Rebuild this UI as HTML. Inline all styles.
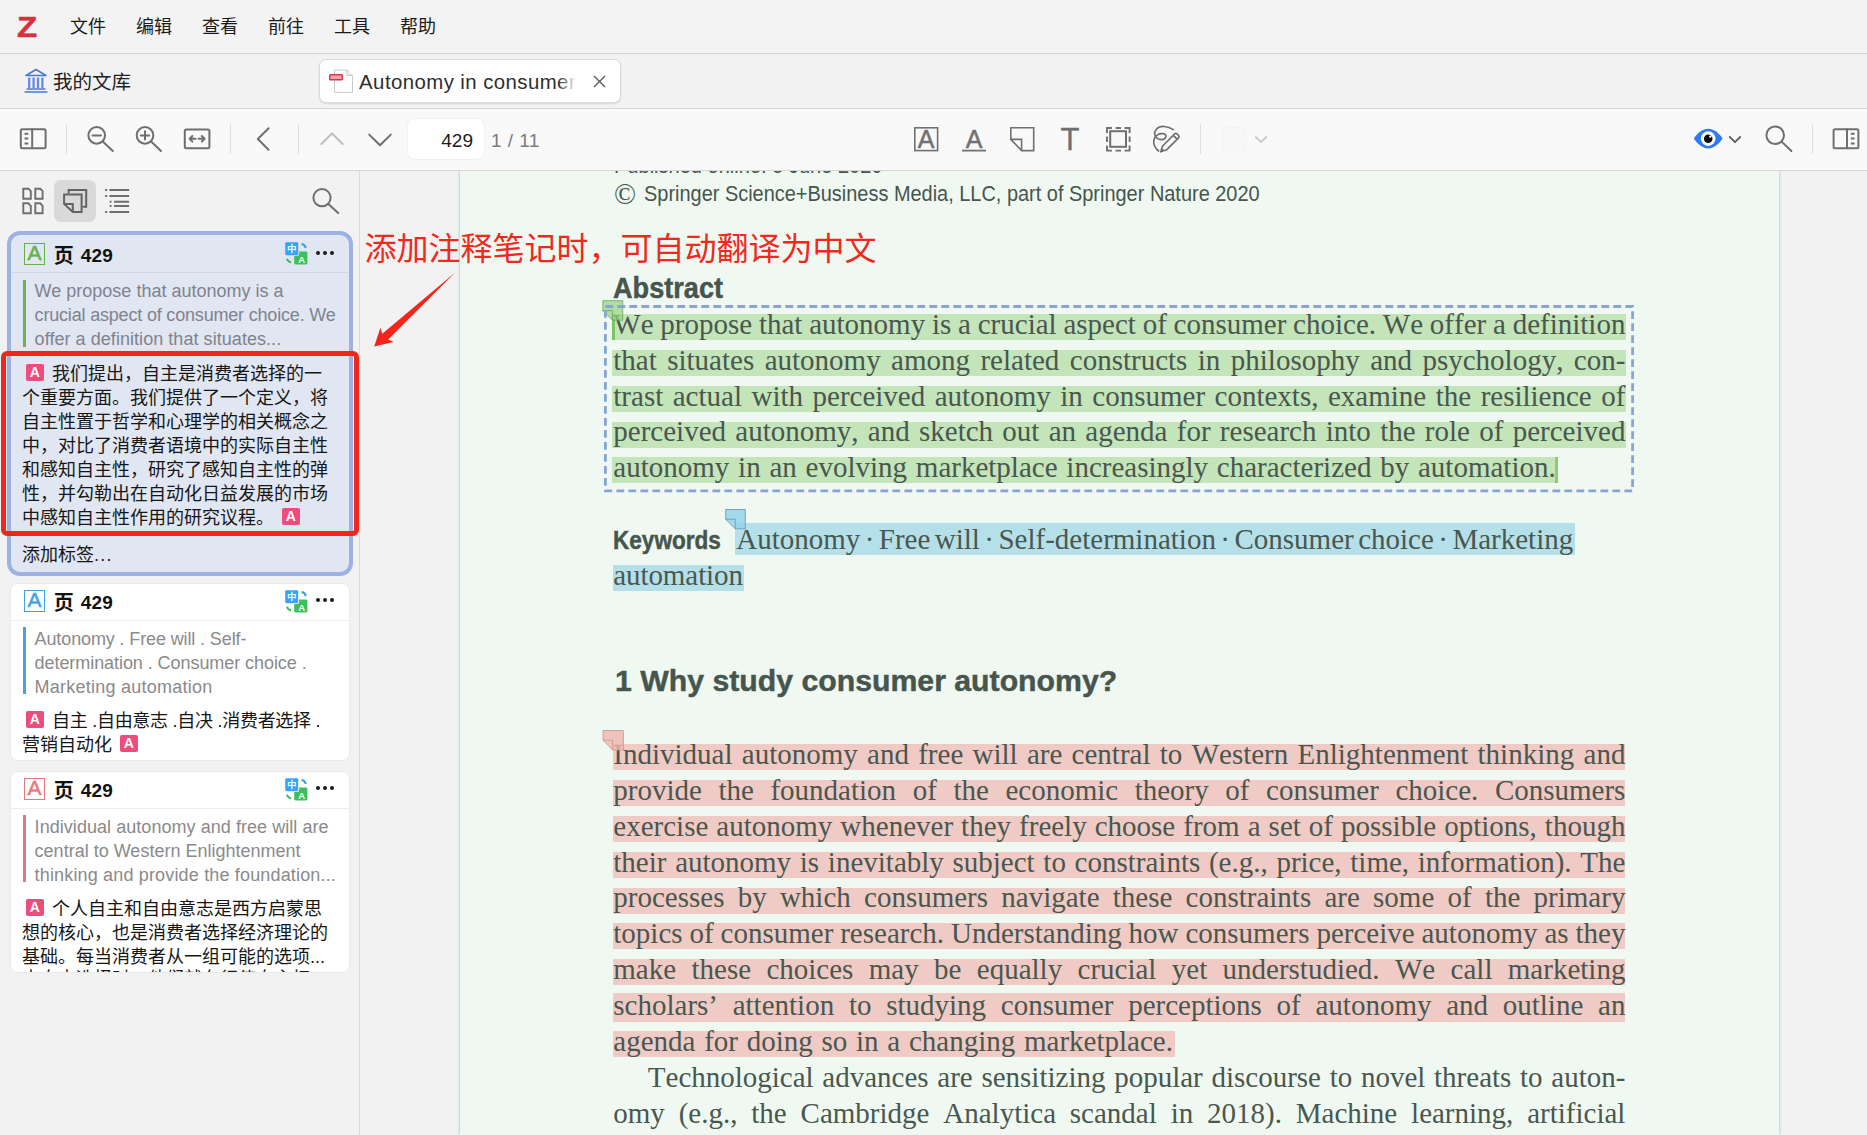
<!DOCTYPE html>
<html lang="zh-CN">
<head>
<meta charset="utf-8">
<title>Autonomy in consumer choice - Zotero</title>
<style>
*{box-sizing:border-box;margin:0;padding:0}
html,body{width:1867px;height:1135px;overflow:hidden;background:#f2f2f2}
body{position:relative;font-family:"Liberation Sans","Noto Sans CJK SC",sans-serif;color:#1a1a1a}
.abs{position:absolute}
/* ---------- menu bar ---------- */
#menubar{position:absolute;left:0;top:0;width:1867px;height:54px;background:#f3f3f3;border-bottom:1px solid #d4d4d4}
#menubar .mi{position:absolute;top:13px;height:28px;line-height:28px;font-size:18px;color:#1b1b1b;white-space:nowrap}
#zlogo{position:absolute;left:16.8px;top:9.1px;font-family:"Liberation Sans",sans-serif;font-weight:bold;font-size:30px;line-height:36px;color:#d9303e;-webkit-text-stroke:.5px #d9303e;transform:scaleX(1.1);transform-origin:0 50%}
/* ---------- tab bar ---------- */
#tabbar{position:absolute;left:0;top:54px;width:1867px;height:55px;background:#f2f2f2;border-bottom:1px solid #d6d6d6}
#libtab{position:absolute;left:53px;top:14px;font-size:19.5px;line-height:28px;color:#222;white-space:nowrap}
#tab{position:absolute;left:319px;top:5px;width:301.5px;height:44px;background:#fff;border:1px solid #d9d9d9;border-radius:7px;box-shadow:0 1px 2px rgba(0,0,0,.12)}
#tab .tt{position:absolute;left:39.1px;top:6.5px;width:226px;height:30px;line-height:30px;font-size:20.4px;color:#2e2e2e;white-space:nowrap;overflow:hidden}
#tab .fade{position:absolute;left:238px;top:4px;width:30px;height:34px;background:linear-gradient(90deg,rgba(255,255,255,0),rgba(255,255,255,.9) 55%,#fff 85%)}
/* ---------- toolbar ---------- */
#toolbar{position:absolute;left:0;top:109px;width:1867px;height:62px;background:#f9f9f9;border-bottom:1px solid #d6d6d6}
.sep{position:absolute;top:15px;width:1px;height:30px;background:#dedede}
#pageinput{position:absolute;left:408px;top:10px;width:76px;height:40px;background:#fff;border-radius:7px;font-size:19px;line-height:43px;text-align:right;padding-right:11px;color:#1c1c1c;box-shadow:0 0 0 1px rgba(0,0,0,.03)}
#pagecount{position:absolute;left:491px;top:10px;height:40px;line-height:43px;font-size:19px;color:#7c7c7c;white-space:nowrap;letter-spacing:.45px}
svg{position:absolute;overflow:visible}
.ic{fill:none;stroke:#6f6f6f;stroke-width:2;stroke-linecap:round;stroke-linejoin:round}
/* ---------- sidebar ---------- */
#sidebar{position:absolute;left:0;top:171px;width:360px;height:964px;background:#f2f2f2;border-right:1px solid #dadada}
#selbtn{position:absolute;left:54px;top:9px;width:42px;height:42px;border-radius:7px;background:#d9d9d9}
.card{position:absolute;left:10px;width:340px;background:#fff;border:1px solid #e9e9e9;border-radius:7px;overflow:hidden}
.card.sel{left:7px;width:346px;background:#e0e6f2;border:4px solid #9db1e5;border-radius:13px}
.card .hd{position:absolute;left:0;top:0;right:0;border-bottom:1px solid #ececec}
.card.sel .hd{border-bottom-color:#d0d6e3}
.card .pg{position:absolute;font-weight:bold;font-size:20px;line-height:24px;color:#111;white-space:nowrap}
.card .bar{position:absolute;width:3px}
.card .q{position:absolute;font-size:18px;line-height:24px;color:#8a8a8a;white-space:nowrap}
.card.sel .q{color:#7e838e}
.card .c{position:absolute;font-size:18px;line-height:24px;color:#161616;white-space:nowrap}
.pa{display:inline-block;width:17.6px;height:17.4px;background:#ee4c7c;border-radius:2px;color:#fff;font-weight:bold;font-size:14px;line-height:17px;text-align:center;vertical-align:3px;font-family:"Liberation Sans",sans-serif}
.dots{position:absolute;width:20px;height:4px}
.dots i{position:absolute;top:0;width:4px;height:4px;border-radius:50%;background:#1a1a1a}
.pa{margin-left:4px;margin-right:8.4px}
.pa.e{margin-left:8px;margin-right:0}
.num{font-size:19px;letter-spacing:.15px;margin-left:1px}
.ye{position:relative;top:1px;left:-.4px}
/* ---------- viewer ---------- */
#viewer{position:absolute;left:360px;top:171px;width:1507px;height:964px;background:#f2f2f2;overflow:hidden}
#pc{position:absolute;left:-360px;top:-171px;width:1867px;height:1135px}
#page{position:absolute;left:460px;top:171px;width:1319px;height:964px;background:#f0f9f1;box-shadow:0 0 3px rgba(0,0,0,.28)}
.ln{font-kerning:none;position:absolute;left:614px;width:1011px;height:36px;line-height:36px;font-family:"Liberation Serif",serif;font-size:29px;color:#49574f;white-space:nowrap;text-align:justify;text-align-last:justify}
.ln.l{text-align:left;text-align-last:left;width:auto}
.sans{position:absolute;font-family:"Liberation Sans",sans-serif;color:#46554d;white-space:nowrap;transform-origin:0 50%}
.sans.b{-webkit-text-stroke:0.45px #46554d}
.hl{position:absolute;height:26px}
.hg{background:#c4e4ba}.hb{background:#b5e0ea}.hr{background:#f0cbc5}
#redbox{position:absolute;left:1px;top:180.4px;width:358.4px;height:184.6px;border:5px solid #f3261d;border-radius:6px}
#redtxt{position:absolute;left:364.6px;top:226.7px;font-size:32px;line-height:44px;color:#f0281e;white-space:nowrap}
</style>
</head>
<body>
<!-- MENU BAR -->
<div id="menubar">
  <div id="zlogo">Z</div>
  <div class="mi" style="left:70px">文件</div>
  <div class="mi" style="left:136px">编辑</div>
  <div class="mi" style="left:202px">查看</div>
  <div class="mi" style="left:268px">前往</div>
  <div class="mi" style="left:334px">工具</div>
  <div class="mi" style="left:400px">帮助</div>
</div>
<!-- TAB BAR -->
<div id="tabbar">
  <svg style="left:24px;top:14px" width="24" height="25" viewBox="0 0 24 25"><g fill="none" stroke="#4a78d6" stroke-width="1.6"><path d="M2 7.5L12 1.5L22 7.5Z" stroke-linejoin="round"/><path d="M5.2 9.5V20M9.6 9.5V20M14 9.5V20M18.4 9.5V20" stroke-width="2.3" stroke="#668ce0"/><path d="M2.5 21H21.5M0.5 24H23.5"/></g></svg>
  <div id="libtab">我的文库</div>
  <div id="tab">
    <svg style="left:9.1px;top:9.1px" width="25" height="25" viewBox="0 0 25 25"><path d="M5.5 1H18L23.5 6.5V23.5H5.5Z" fill="#fff" stroke="#c9c9c9" stroke-width="1"/><path d="M18 1V6.5H23.5" fill="#f0f0f0" stroke="#c9c9c9" stroke-width="1"/><rect x="0.7" y="5.7" width="12.6" height="5" rx="0.8" fill="#f4a3ae" stroke="#d8364a" stroke-width="1.4"/></svg>
    <div class="tt"><span style="letter-spacing:0.423px">Autonomy in consumer</span> choice</div>
    <div class="fade"></div>
    <svg style="left:272.5px;top:14.9px" width="13" height="13" viewBox="0 0 13 13"><path d="M1 1L12 12M12 1L1 12" stroke="#5a5a5a" stroke-width="1.4" fill="none"/></svg>
  </div>
</div>
<!-- TOOLBAR -->
<div id="toolbar">
  <div class="sep" style="left:66px"></div>
  <div class="sep" style="left:230px"></div>
  <div class="sep" style="left:298px"></div>
  <div class="sep" style="left:1200px"></div>
  <div class="sep" style="left:1812px"></div>
  <div id="pageinput">429</div>
  <div id="pagecount">1 / 11</div>
  <svg style="left:0;top:0" width="1867" height="62" viewBox="0 109 1867 62">
    <!-- sidebar toggle -->
    <g class="ic"><rect x="20.8" y="129.2" width="24.8" height="19" rx="1.5"/><path d="M32.2 129.2V148.2"/><path d="M24.5 133.8H28.3M24.5 138.6H28.3M24.5 143.4H28.3" stroke-linecap="butt"/></g>
    <!-- zoom out -->
    <g class="ic"><circle cx="96.7" cy="135.4" r="8.3"/><path d="M92.5 135.4H101M102.8 141.6L112.8 151"/></g>
    <!-- zoom in -->
    <g class="ic"><circle cx="145" cy="135.4" r="8.3"/><path d="M140.8 135.4H149.2M145 131.2V139.6M151.1 141.6L161 151"/></g>
    <!-- fit width -->
    <g class="ic"><rect x="184.8" y="129.4" width="24.6" height="18.8" rx="1.5"/><path d="M189.6 138.8H195.6M192.4 136L189.6 138.8L192.4 141.6M198.6 138.8H204.6M201.8 136L204.6 138.8L201.8 141.6"/></g>
    <!-- back -->
    <path class="ic" d="M268.6 128.2L257.8 139L268.6 149.8"/>
    <!-- up / down -->
    <path class="ic" d="M321.4 144L332 133.4L342.6 144" style="stroke:#bdbdbd"/>
    <path class="ic" d="M369.2 134.6L380 145.2L390.8 134.6"/>
    <!-- highlight -->
    <rect x="914.8" y="127.8" width="22.8" height="22.8" fill="none" stroke="#707070" stroke-width="1.6"/>
    <text x="926.2" y="148" text-anchor="middle" font-family="Liberation Sans, sans-serif" font-size="25" fill="#707070" stroke="#707070" stroke-width="0.5">A</text>
    <!-- underline -->
    <text x="974.1" y="148" text-anchor="middle" font-family="Liberation Sans, sans-serif" font-size="25" fill="#707070" stroke="#707070" stroke-width="0.5">A</text>
    <path d="M962 150.6H986" stroke="#707070" stroke-width="1.8" fill="none"/>
    <!-- note -->
    <path d="M1010.8 127.8H1033.7V150.6H1021.6L1010.8 139.4ZM1010.8 139.4H1021.6V150.6" fill="none" stroke="#707070" stroke-width="1.6" stroke-linejoin="miter"/>
    <!-- text -->
    <text x="1070" y="149.5" text-anchor="middle" font-family="Liberation Sans, sans-serif" font-size="31" fill="#707070" stroke="#707070" stroke-width="0.3">T</text>
    <!-- area -->
    <path d="M1107 133V128H1112M1115.6 128H1121M1124.6 128H1129.6V133M1129.6 136.6V142M1129.6 145.6V150.6H1124.6M1121 150.6H1115.6M1112 150.6H1107V145.6M1107 142V136.6" fill="none" stroke="#707070" stroke-width="1.9"/>
    <rect x="1110.2" y="131.2" width="15.8" height="15.6" fill="none" stroke="#707070" stroke-width="2"/>
    <!-- ink -->
    <path d="M1173.4 129.6C1168 126 1160 125 1156.4 129.2C1153.4 132.6 1154.4 136.2 1157 138.2C1160.2 140.6 1165.2 140 1165.9 136.6C1166.5 133.4 1161 132.6 1157.6 134.9C1152 138.6 1152.6 146 1158.6 151" fill="none" stroke="#707070" stroke-width="1.7" stroke-linecap="round"/>
    <path d="M1160.8 151.8L1162.6 146L1175 133.6Q1175.9 132.9 1176.8 133.6L1178.8 135.8Q1179.5 136.7 1178.8 137.6L1166.6 149.8ZM1173.4 135.4L1177 139.2" fill="none" stroke="#707070" stroke-width="1.7" stroke-linejoin="round"/>
    <path d="M1160.8 151.8L1162 148.2L1164.6 150.6Z" fill="#707070"/>
    <!-- colour swatch -->
    <rect x="1223" y="127.4" width="23" height="23" rx="3.5" fill="#f7f7f7" stroke="#f3f3f3" stroke-width="1"/>
    <path class="ic" d="M1255.8 137L1261 142.2L1266.2 137" style="stroke:#c9c9c9;stroke-width:1.8"/>
    <!-- eye -->
    <path d="M1693.8 138.6C1698 132.4 1702.8 128.8 1708.2 128.8C1713.6 128.8 1718.4 132.4 1722.6 138.6C1718.4 144.8 1713.6 148.4 1708.2 148.4C1702.8 148.4 1698 144.8 1693.8 138.6Z" fill="#2e7bf5"/>
    <circle cx="1708.2" cy="138.6" r="7.3" fill="#fff"/><circle cx="1708.2" cy="138.8" r="4.3" fill="#0c0c0c"/><circle cx="1710.3" cy="136.6" r="1.2" fill="#fff"/>
    <path class="ic" d="M1729.8 137L1735 142.2L1740.2 137" style="stroke:#5f5f5f;stroke-width:1.8"/>
    <!-- search -->
    <g class="ic"><circle cx="1775.2" cy="135.2" r="8.8"/><path d="M1781.6 141.6L1791.4 151"/></g>
    <!-- right pane -->
    <g class="ic"><rect x="1833.6" y="129.2" width="24.8" height="19" rx="1.5"/><path d="M1847 129.2V148.2"/><path d="M1850.8 133.8H1854.6M1850.8 138.6H1854.6M1850.8 143.4H1854.6" stroke-linecap="butt"/></g>
  </svg>
</div>
<!-- SIDEBAR -->
<div id="sidebar">
<div id="selbtn"></div>
<svg style="left:0;top:0" width="360" height="60" viewBox="0 171 360 60">
<g fill="none" stroke="#6e6e6e" stroke-width="1.9" stroke-linejoin="miter">
<path d="M23.3 188.7H28.4L30.8 191.2V198.7H23.3Z"/><path d="M35.3 188.7H40.2L42.6 191.2V198.7H35.3Z"/>
<path d="M23.3 203.3H28.4L30.8 205.8V213.2H23.3Z"/><path d="M35.3 203.3H40.2L42.6 205.8V213.2H35.3Z"/>
</g>
<g fill="none" stroke="#636363" stroke-width="2" stroke-linejoin="miter">
<path d="M68.6 193.4V189.9H86.2V206.8H82.6"/>
<path d="M64.1 194.4H81.6V211.9H72.8L64.1 203.9ZM64.1 203.9H72.8V211.9"/>
</g>
<g fill="none" stroke="#6e6e6e" stroke-width="2">
<path d="M105.1 190H107.1M109.4 190H129.1M105.1 195.9H107.1M109.4 195.9H129.1M109.7 201.7H111.5M114.1 201.7H129.1M109.7 206H111.5M114.1 206H129.1M105.1 212H107.1M109.4 212H129.1"/>
</g>
<g fill="none" stroke="#6e6e6e" stroke-width="2" stroke-linecap="round"><circle cx="322" cy="197.7" r="8.6"/><path d="M328.3 203.9L338.2 213"/></g>
</svg>
<div class="card sel" style="top:60px;height:345px">
<div class="hd" style="height:38.0px"></div>
<div class="abs" style="left:12.9px;top:8.2px;width:21.2px;height:21.4px;border:1.8px solid #66b145;color:#66b145;font-size:21px;line-height:18.6px;text-align:center;font-family:'Liberation Sans',sans-serif;-webkit-text-stroke:0.5px #66b145">A</div>
<div class="pg" style="left:43.2px;top:7.9px"><span class="ye">页</span> <span class="num">429</span></div>
<svg style="left:273.8px;top:7.400000000000006px" width="23" height="23" viewBox="0 0 23 23"><rect x="9.2" y="9.4" width="13.2" height="13" rx="1.4" fill="#3cc05c"/><rect x="-0.9" y="-0.8" width="15" height="14.8" rx="2.2" fill="#e0e6f2" class="tbg"/><rect x="0.2" y="0.2" width="13" height="13" rx="1.4" fill="#36a3f5"/><text x="6.7" y="10.2" text-anchor="middle" font-size="9.5" font-weight="bold" fill="#eaffff" font-family="Noto Sans CJK SC, sans-serif">中</text><text x="16.6" y="20.6" text-anchor="middle" font-size="9.5" font-weight="bold" fill="#f0fff0" font-family="Liberation Sans, sans-serif">A</text><path d="M16.6 1.9A5.4 5.4 0 0 1 20.8 6" fill="none" stroke="#3a9be6" stroke-width="2"/><path d="M1.9 16.8A5.4 5.4 0 0 0 6 20.4" fill="none" stroke="#3cb85a" stroke-width="2"/></svg>
<div class="dots" style="left:304.8px;top:16.200000000000017px"><i style="left:0"></i><i style="left:7.1px"></i><i style="left:14.2px"></i></div>
<div class="bar" style="left:12px;top:44.9px;height:67.1px;background:#6db34a"></div>
<div class="q" style="letter-spacing:0.006px;left:23.6px;top:43.90px">We propose that autonomy is a</div>
<div class="q" style="letter-spacing:-0.184px;left:23.6px;top:68.00px">crucial aspect of consumer choice. We</div>
<div class="q" style="letter-spacing:0.051px;left:23.6px;top:92.00px">offer a definition that situates...</div>
<div class="c" style="left:11px;top:127.0px"><span class="pa">A</span>我们提出，自主是消费者选择的一</div>
<div class="c" style="left:11px;top:151.0px">个重要方面。我们提供了一个定义，将</div>
<div class="c" style="left:11px;top:175.0px">自主性置于哲学和心理学的相关概念之</div>
<div class="c" style="left:11px;top:199.0px">中，对比了消费者语境中的实际自主性</div>
<div class="c" style="left:11px;top:223.0px">和感知自主性，研究了感知自主性的弹</div>
<div class="c" style="left:11px;top:247.0px">性，并勾勒出在自动化日益发展的市场</div>
<div class="c" style="left:11px;top:271.0px">中感知自主性作用的研究议程。<span class="pa e">A</span></div>
<div class="c" style="left:11px;top:307.7px">添加标签<span style="letter-spacing:1.3px">...</span></div>
</div>
<div class="card" style="top:412px;height:177.6px">
<div class="hd" style="height:37.0px"></div>
<div class="abs" style="left:12.9px;top:6.4px;width:21.2px;height:21.4px;border:1.8px solid #43a4df;color:#43a4df;font-size:21px;line-height:18.6px;text-align:center;font-family:'Liberation Sans',sans-serif;-webkit-text-stroke:0.5px #43a4df">A</div>
<div class="pg" style="left:43.2px;top:6.1px"><span class="ye">页</span> <span class="num">429</span></div>
<svg style="left:273.8px;top:5.600000000000023px" width="23" height="23" viewBox="0 0 23 23"><rect x="9.2" y="9.4" width="13.2" height="13" rx="1.4" fill="#3cc05c"/><rect x="-0.9" y="-0.8" width="15" height="14.8" rx="2.2" fill="#ffffff" class="tbg"/><rect x="0.2" y="0.2" width="13" height="13" rx="1.4" fill="#36a3f5"/><text x="6.7" y="10.2" text-anchor="middle" font-size="9.5" font-weight="bold" fill="#eaffff" font-family="Noto Sans CJK SC, sans-serif">中</text><text x="16.6" y="20.6" text-anchor="middle" font-size="9.5" font-weight="bold" fill="#f0fff0" font-family="Liberation Sans, sans-serif">A</text><path d="M16.6 1.9A5.4 5.4 0 0 1 20.8 6" fill="none" stroke="#3a9be6" stroke-width="2"/><path d="M1.9 16.8A5.4 5.4 0 0 0 6 20.4" fill="none" stroke="#3cb85a" stroke-width="2"/></svg>
<div class="dots" style="left:304.8px;top:14.399999999999977px"><i style="left:0"></i><i style="left:7.1px"></i><i style="left:14.2px"></i></div>
<div class="bar" style="left:12px;top:43.2px;height:66.7px;background:#4ba3da"></div>
<div class="q" style="letter-spacing:-0.121px;left:23.6px;top:42.90px">Autonomy . Free will . Self-</div>
<div class="q" style="letter-spacing:-0.065px;left:23.6px;top:67.00px">determination . Consumer choice .</div>
<div class="q" style="letter-spacing:0.245px;left:23.6px;top:91.00px">Marketing automation</div>
<div class="c" style="left:11px;top:125.0px"><span class="pa">A</span><span class="fit" style="letter-spacing:-0.272px">自主 .自由意志 .自决 .消费者选择 .</span></div>
<div class="c" style="left:11px;top:148.6px">营销自动化<span class="pa e">A</span></div>

</div>
<div class="card" style="top:600px;height:201.6px">
<div class="hd" style="height:37.0px"></div>
<div class="abs" style="left:12.9px;top:6.4px;width:21.2px;height:21.4px;border:1.8px solid #e8797b;color:#e8797b;font-size:21px;line-height:18.6px;text-align:center;font-family:'Liberation Sans',sans-serif;-webkit-text-stroke:0.5px #e8797b">A</div>
<div class="pg" style="left:43.2px;top:6.1px"><span class="ye">页</span> <span class="num">429</span></div>
<svg style="left:273.8px;top:5.600000000000023px" width="23" height="23" viewBox="0 0 23 23"><rect x="9.2" y="9.4" width="13.2" height="13" rx="1.4" fill="#3cc05c"/><rect x="-0.9" y="-0.8" width="15" height="14.8" rx="2.2" fill="#ffffff" class="tbg"/><rect x="0.2" y="0.2" width="13" height="13" rx="1.4" fill="#36a3f5"/><text x="6.7" y="10.2" text-anchor="middle" font-size="9.5" font-weight="bold" fill="#eaffff" font-family="Noto Sans CJK SC, sans-serif">中</text><text x="16.6" y="20.6" text-anchor="middle" font-size="9.5" font-weight="bold" fill="#f0fff0" font-family="Liberation Sans, sans-serif">A</text><path d="M16.6 1.9A5.4 5.4 0 0 1 20.8 6" fill="none" stroke="#3a9be6" stroke-width="2"/><path d="M1.9 16.8A5.4 5.4 0 0 0 6 20.4" fill="none" stroke="#3cb85a" stroke-width="2"/></svg>
<div class="dots" style="left:304.8px;top:14.399999999999977px"><i style="left:0"></i><i style="left:7.1px"></i><i style="left:14.2px"></i></div>
<div class="bar" style="left:12px;top:43.2px;height:67.0px;background:#e87678"></div>
<div class="q" style="letter-spacing:0.049px;left:23.6px;top:43.30px">Individual autonomy and free will are</div>
<div class="q" style="letter-spacing:0.006px;left:23.6px;top:67.40px">central to Western Enlightenment</div>
<div class="q" style="letter-spacing:0.163px;left:23.6px;top:91.40px">thinking and provide the foundation...</div>
<div class="c" style="left:11px;top:124.5px"><span class="pa">A</span>个人自主和自由意志是西方启蒙思</div>
<div class="c" style="left:11px;top:148.5px">想的核心，也是消费者选择经济理论的</div>
<div class="c" style="left:11px;top:172.5px">基础。每当消费者从一组可能的选项...</div>
<div class="c" style="left:11px;top:195.3px">中自由选择时，他们就在行使自主权。</div>

</div>
<div id="redbox"></div>
</div>
<!-- VIEWER -->
<div id="viewer">
<div id="pc">
<div id="page"></div>
<div class="hl hg" style="left:611.6px;top:314.1px;width:1014.4px;height:26px"></div>
<div class="hl hg" style="left:611.6px;top:349.9px;width:1014.4px;height:26px"></div>
<div class="hl hg" style="left:611.6px;top:385.7px;width:1014.4px;height:26px"></div>
<div class="hl hg" style="left:611.6px;top:421.5px;width:1014.4px;height:26px"></div>
<div class="hl hg" style="left:611.6px;top:457.3px;width:946.6px;height:26px"></div>
<div class="hl hb" style="left:735.1px;top:523.3px;width:840.2px;height:31.3px"></div>
<div class="hl hb" style="left:613.4px;top:564.9px;width:130.2px;height:26px"></div>
<div class="hl hr" style="left:613.2px;top:744.1px;width:1012.0px;height:26px"></div>
<div class="hl hr" style="left:613.2px;top:779.9px;width:1012.0px;height:26px"></div>
<div class="hl hr" style="left:613.2px;top:815.8px;width:1012.0px;height:26px"></div>
<div class="hl hr" style="left:613.2px;top:851.6px;width:1012.0px;height:26px"></div>
<div class="hl hr" style="left:613.2px;top:887.5px;width:1012.0px;height:26px"></div>
<div class="hl hr" style="left:613.2px;top:923.3px;width:1012.0px;height:26px"></div>
<div class="hl hr" style="left:613.2px;top:959.2px;width:1012.0px;height:26px"></div>
<div class="hl hr" style="left:613.2px;top:993.0px;width:1012.0px;height:29.3px"></div>
<div class="hl hr" style="left:613.2px;top:1030.9px;width:561.8px;height:26px"></div>
<div class="abs" style="left:611.6px;top:314.1px;width:3px;height:26px;background:#7cc362"></div>
<div class="abs" style="left:1555.2px;top:457.3px;width:3px;height:26px;background:#8ecb78"></div>
<div class="ln l" style="word-spacing:-0.466px;top:306.01px;left:613.3px">We propose that autonomy is a crucial aspect of consumer choice. We offer a definition</div>
<div class="ln l" style="word-spacing:3.191px;top:341.81px;left:613.3px">that situates autonomy among related constructs in philosophy and psychology, con-</div>
<div class="ln l" style="word-spacing:2.258px;top:377.61px;left:613.3px">trast actual with perceived autonomy in consumer contexts, examine the resilience of</div>
<div class="ln l" style="word-spacing:2.040px;top:413.41px;left:613.3px">perceived autonomy, and sketch out an agenda for research into the role of perceived</div>
<div class="ln l" style="word-spacing:1.540px;top:449.21px;left:613.3px">autonomy in an evolving marketplace increasingly characterized by automation.</div>
<div class="ln l" style="word-spacing:-2.795px;top:521.01px;left:736.2px">Autonomy · Free will · Self-determination · Consumer choice · Marketing</div>
<div class="ln l" style="letter-spacing:-0.088px;top:556.81px;left:613.3px">automation</div>
<div class="ln l" style="word-spacing:2.033px;top:736.01px;left:613.3px">Individual autonomy and free will are central to Western Enlightenment thinking and</div>
<div class="ln l" style="word-spacing:9.321px;top:771.86px;left:613.3px">provide the foundation of the economic theory of consumer choice. Consumers</div>
<div class="ln l" style="word-spacing:0.788px;top:807.71px;left:613.3px">exercise autonomy whenever they freely choose from a set of possible options, though</div>
<div class="ln l" style="word-spacing:1.442px;top:843.56px;left:613.3px">their autonomy is inevitably subject to constraints (e.g., price, time, information). The</div>
<div class="ln l" style="word-spacing:5.986px;top:879.41px;left:613.3px">processes by which consumers navigate these constraints are some of the primary</div>
<div class="ln l" style="word-spacing:-0.340px;top:915.26px;left:613.3px">topics of consumer research. Understanding how consumers perceive autonomy as they</div>
<div class="ln l" style="word-spacing:8.118px;top:951.11px;left:613.3px">make these choices may be equally crucial yet understudied. We call marketing</div>
<div class="ln l" style="word-spacing:7.463px;top:986.96px;left:613.3px">scholars’ attention to studying consumer perceptions of autonomy and outline an</div>
<div class="ln l" style="word-spacing:1.488px;top:1022.81px;left:613.3px">agenda for doing so in a changing marketplace.</div>
<div class="ln l" style="word-spacing:1.446px;top:1058.66px;left:647.8px">Technological advances are sensitizing popular discourse to novel threats to auton-</div>
<div class="ln l" style="word-spacing:6.588px;top:1094.51px;left:613.3px">omy (e.g., the Cambridge Analytica scandal in 2018). Machine learning, artificial</div>
<div class="sans" style="transform:scaleX(0.8949);left:614px;top:150.74px;font-size:22.4px;line-height:29px;">Published online: 5 June 2020</div>
<div class="ln l" style="left:614px;top:176.01px;font-size:29px">©</div>
<div class="sans" style="transform:scaleX(0.8904);left:644.4px;top:178.54px;font-size:22.4px;line-height:29px;">Springer Science+Business Media, LLC, part of Springer Nature 2020</div>
<div class="sans b" style="transform:scaleX(0.9483);left:612.8px;top:269.99px;font-size:28.6px;line-height:37px;font-weight:bold;">Abstract</div>
<div class="sans b" style="transform:scaleX(0.8883);left:613.4px;top:523.50px;font-size:25.4px;line-height:33px;font-weight:bold;">Keywords</div>
<div class="sans b" style="transform:scaleX(1.0247);left:614.8px;top:662.28px;font-size:29.5px;line-height:38px;font-weight:bold;">1 Why study consumer autonomy?</div>
<svg style="left:0;top:0" width="1867" height="1135" viewBox="0 0 1867 1135"><g stroke-width="1" stroke-linejoin="miter"><path d="M602.9 300.7H622.7V320.2H612.4L602.9 310.6Z" fill="rgba(150,210,130,.72)" stroke="rgba(110,160,100,.8)"/><path d="M602.9 310.6H612.4V320.2" fill="none" stroke="rgba(110,160,100,.8)"/><path d="M725.7 509.5H745.3V528.8H735.2L725.7 519.2Z" fill="rgba(150,210,235,.85)" stroke="rgba(110,150,170,.85)"/><path d="M725.7 519.2H735.2V528.8" fill="none" stroke="rgba(110,150,170,.85)"/><path d="M603 730.5H623.4V750H612.6L603 740.2Z" fill="rgba(240,180,175,.8)" stroke="rgba(205,150,145,.85)"/><path d="M603 740.2H612.6V750" fill="none" stroke="rgba(205,150,145,.85)"/></g><rect x="605.4" y="306.5" width="1027.2" height="184.4" fill="none" stroke="#88a5d1" stroke-width="2.8" stroke-dasharray="7.8 4.2"/><path d="M455.2 272.5L382.3 333.8L380.4 327.8L374.2 346.6L393.7 342L388.2 339.5Z" fill="#f5251b"/></svg>
<div id="redtxt">添加注释笔记时，可自动翻译为中文</div>
</div>
</div>
</body>
</html>
